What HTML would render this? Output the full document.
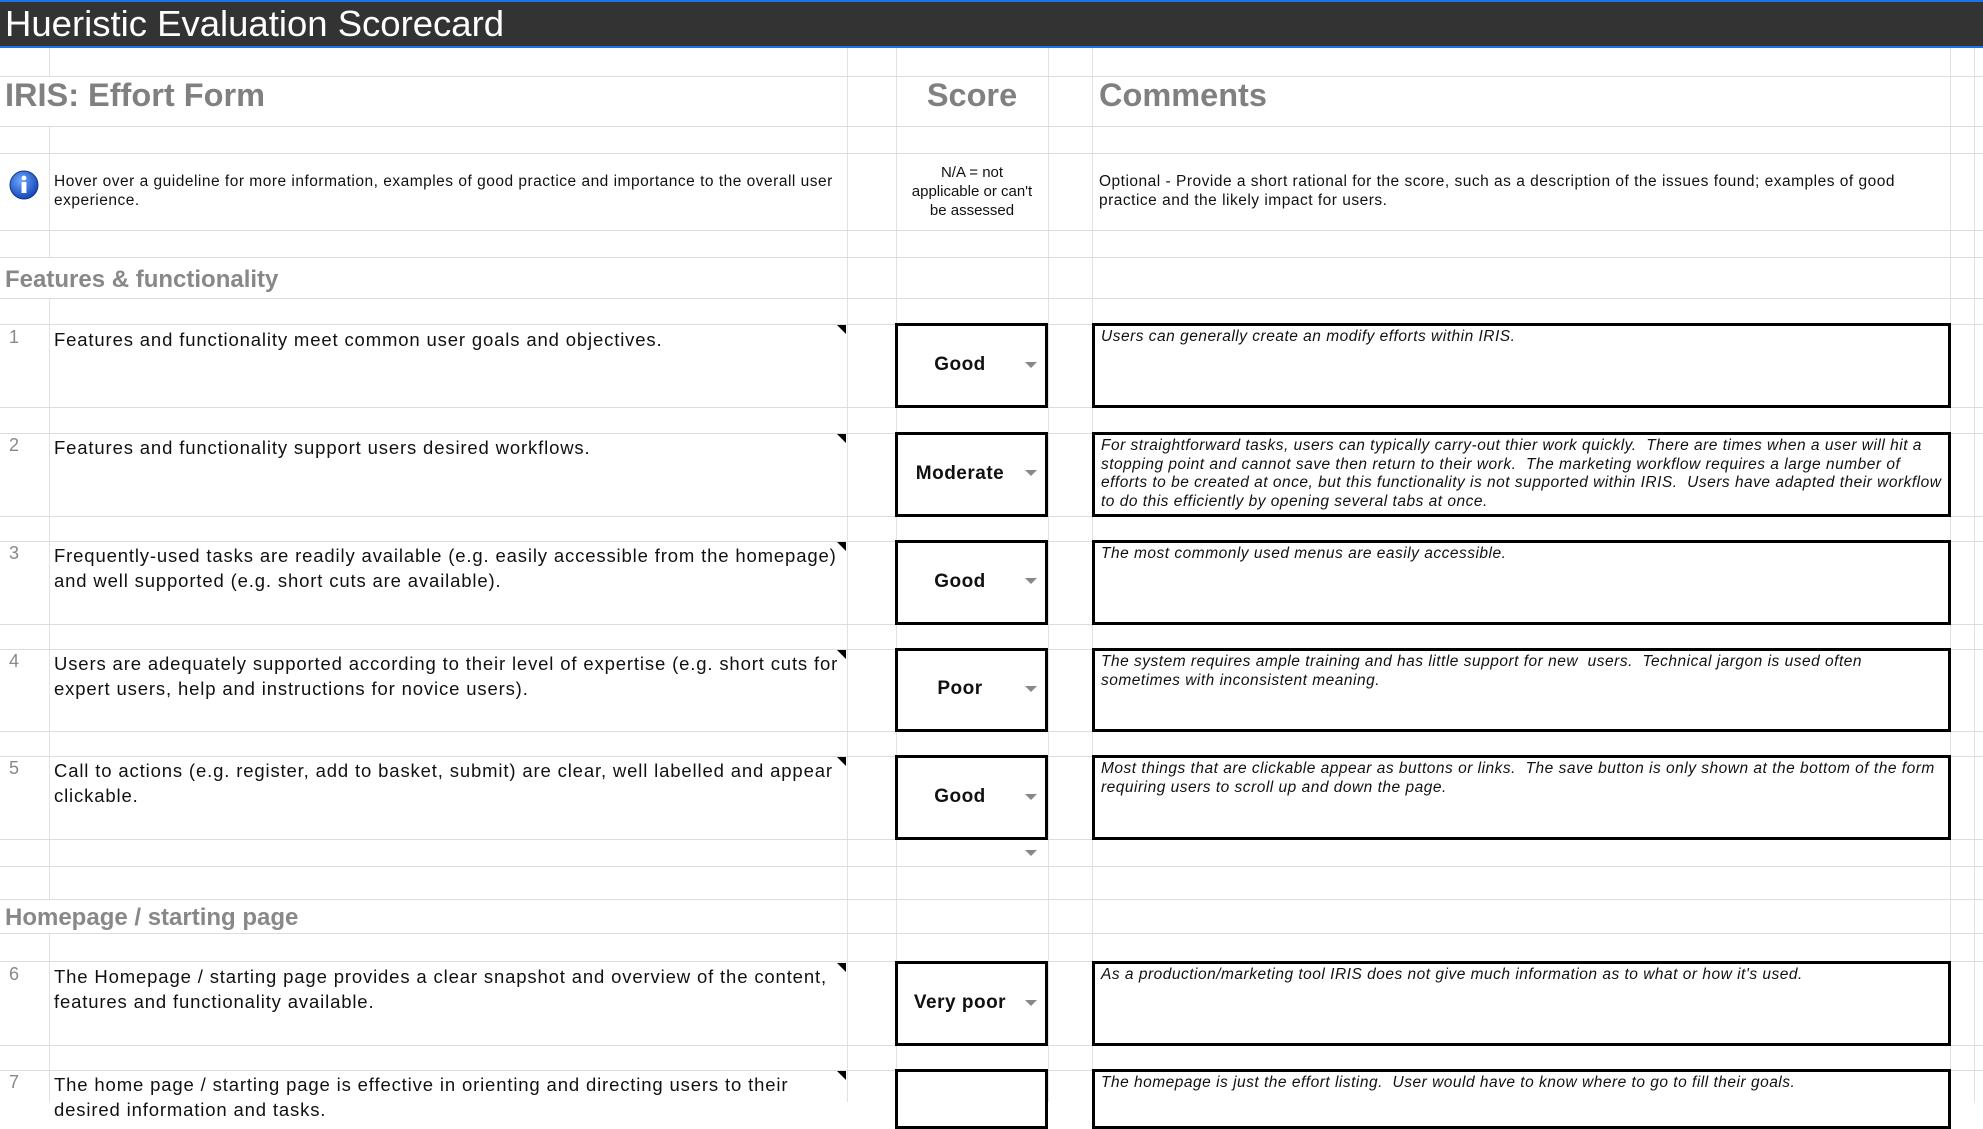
<!DOCTYPE html>
<html><head><meta charset="utf-8"><style>
*{margin:0;padding:0;box-sizing:border-box}
body{width:1983px;height:1102px;overflow:hidden;background:#fff;font-family:"Liberation Sans",Arial,sans-serif;position:relative}
.a{position:absolute}
.h{position:absolute;left:0;width:1983px;height:1px;background:#dcdcdc}
.v{position:absolute;top:48px;height:1054px;width:1px;background:#e2e2e2}
.num{position:absolute;left:9px;font-size:18px;color:#888}
.txt{position:absolute;left:54px;width:792px;font-size:18.5px;line-height:25px;color:#111;letter-spacing:.85px}
.tri{position:absolute;left:837px;width:0;height:0;border-left:9px solid transparent;border-top:9px solid #000}
.sb{position:absolute;left:895px;width:153px;border:3px solid #000;background:#fff}
.sb span{position:absolute;left:0;width:124px;text-align:center;font-weight:bold;font-size:19px;color:#111;letter-spacing:.5px}
.dd{position:absolute;left:1025px;width:0;height:0;border-left:6px solid transparent;border-right:6px solid transparent;border-top:6px solid #888}
.cb{position:absolute;left:1092px;width:859px;border:3px solid #000;background:#fff;padding:2px 6px;font-style:italic;font-size:15.5px;line-height:18.5px;color:#111;letter-spacing:.5px}
.sec{position:absolute;left:5px;font-size:24px;font-weight:bold;color:#888}
</style></head><body>
<div class="a" style="left:0;top:0;width:1983px;height:48px;background:#333;border-top:2px solid #1a73e8;border-bottom:2px solid #1a73e8"></div>
<div class="a" style="left:5px;top:3px;font-size:36.5px;color:#fff;line-height:42px">Hueristic Evaluation Scorecard</div>

<div class="v" style="left:49px"></div>
<div class="v" style="left:847px"></div>
<div class="v" style="left:896px"></div>
<div class="v" style="left:1048px"></div>
<div class="v" style="left:1092px"></div>
<div class="v" style="left:1950px"></div>
<div class="v" style="left:1974px"></div>

<div class="h" style="top:76px"></div><div class="h" style="top:126px"></div>
<div class="h" style="top:153px"></div><div class="h" style="top:230px"></div>
<div class="h" style="top:257px"></div><div class="h" style="top:298px"></div>
<div class="h" style="top:324px"></div><div class="h" style="top:407px"></div>
<div class="h" style="top:433px"></div><div class="h" style="top:516px"></div>
<div class="h" style="top:541px"></div><div class="h" style="top:624px"></div>
<div class="h" style="top:649px"></div><div class="h" style="top:731px"></div>
<div class="h" style="top:756px"></div><div class="h" style="top:839px"></div>
<div class="h" style="top:866px"></div><div class="h" style="top:899px"></div>
<div class="h" style="top:933px"></div><div class="h" style="top:961px"></div>
<div class="h" style="top:1045px"></div><div class="h" style="top:1070px"></div>

<div class="a" style="left:0;top:77px;width:846px;height:49px;background:#fff"></div>
<div class="a" style="left:0;top:258px;width:846px;height:40px;background:#fff"></div>
<div class="a" style="left:0;top:900px;width:846px;height:33px;background:#fff"></div>
<div class="a" style="left:1093px;top:77px;width:856px;height:49px;background:#fff"></div>
<div class="a" style="left:897px;top:77px;width:150px;height:49px;background:#fff"></div>
<div class="a" style="left:897px;top:154px;width:150px;height:76px;background:#fff"></div>

<div class="a" style="left:5px;top:77px;font-size:32.5px;font-weight:bold;color:#808080">IRIS: Effort Form</div>
<div class="a" style="left:896px;top:77px;width:152px;text-align:center;font-size:32.5px;font-weight:bold;color:#808080">Score</div>
<div class="a" style="left:1099px;top:77px;font-size:32.5px;font-weight:bold;color:#808080">Comments</div>

<svg class="a" style="left:9px;top:170px" width="30" height="30" viewBox="0 0 30 30"><defs><radialGradient id="g" cx="40%" cy="35%" r="65%"><stop offset="0" stop-color="#6fa8ff"/><stop offset="1" stop-color="#1747b8"/></radialGradient></defs><circle cx="15" cy="15" r="14" fill="url(#g)" stroke="#123a8f"/><circle cx="15" cy="8" r="2.4" fill="#fff"/><rect x="12.6" y="12" width="4.8" height="11" fill="#fff"/></svg>
<div class="a" style="left:54px;top:172px;width:800px;font-size:15.5px;line-height:19px;color:#111;letter-spacing:.5px">Hover over a guideline for more information, examples of good practice and importance to the overall user experience.</div>
<div class="a" style="left:896px;top:163px;width:152px;text-align:center;font-size:15px;line-height:19px;color:#111">N/A = not<br>applicable or can't<br>be assessed</div>
<div class="a" style="left:1099px;top:172px;width:845px;font-size:15.5px;line-height:19px;color:#111;letter-spacing:.5px">Optional - Provide a short rational for the score, such as a description of the issues found; examples of good practice and the likely impact for users.</div>

<div class="sec" style="top:266px">Features &amp; functionality</div>
<div class="sec" style="top:904px">Homepage / starting page</div>

<div class="num" style="top:327px">1</div>
<div class="txt" style="top:327px">Features and functionality meet common user goals and objectives.</div>
<div class="tri" style="top:325px"></div>
<div class="sb" style="top:323px;height:85px"><span style="top:28px">Good</span></div><div class="dd" style="top:362px"></div>
<div class="cb" style="top:323px;height:85px">Users can generally create an modify efforts within IRIS.</div>

<div class="num" style="top:435px">2</div>
<div class="txt" style="top:435px">Features and functionality support users desired workflows.</div>
<div class="tri" style="top:434px"></div>
<div class="sb" style="top:432px;height:85px"><span style="top:28px">Moderate</span></div><div class="dd" style="top:470px"></div>
<div class="cb" style="top:432px;height:85px">For straightforward tasks, users can typically carry-out thier work quickly.&nbsp; There are times when a user will hit a stopping point and cannot save then return to their work.&nbsp; The marketing workflow requires a large number of efforts to be created at once, but this functionality is not supported within IRIS.&nbsp; Users have adapted their workflow to do this efficiently by opening several tabs at once.</div>

<div class="num" style="top:543px">3</div>
<div class="txt" style="top:543px">Frequently-used tasks are readily available (e.g. easily accessible from the homepage) and well supported (e.g. short cuts are available).</div>
<div class="tri" style="top:542px"></div>
<div class="sb" style="top:540px;height:85px"><span style="top:28px">Good</span></div><div class="dd" style="top:578px"></div>
<div class="cb" style="top:540px;height:85px">The most commonly used menus are easily accessible.</div>

<div class="num" style="top:651px">4</div>
<div class="txt" style="top:651px">Users are adequately supported according to their level of expertise (e.g. short cuts for expert users, help and instructions for novice users).</div>
<div class="tri" style="top:650px"></div>
<div class="sb" style="top:648px;height:84px"><span style="top:27px">Poor</span></div><div class="dd" style="top:686px"></div>
<div class="cb" style="top:648px;height:84px">The system requires ample training and has little support for new&nbsp; users.&nbsp; Technical jargon is used often sometimes with inconsistent meaning.</div>

<div class="num" style="top:758px">5</div>
<div class="txt" style="top:758px">Call to actions (e.g. register, add to basket, submit) are clear, well labelled and appear clickable.</div>
<div class="tri" style="top:757px"></div>
<div class="sb" style="top:755px;height:85px"><span style="top:28px">Good</span></div><div class="dd" style="top:794px"></div>
<div class="cb" style="top:755px;height:85px">Most things that are clickable appear as buttons or links.&nbsp; The save button is only shown at the bottom of the form requiring users to scroll up and down the page.</div>
<div class="dd" style="top:850px"></div>

<div class="num" style="top:964px">6</div>
<div class="txt" style="top:964px">The Homepage / starting page provides a clear snapshot and overview of the content, features and functionality available.</div>
<div class="tri" style="top:963px"></div>
<div class="sb" style="top:961px;height:85px"><span style="top:28px">Very poor</span></div><div class="dd" style="top:1000px"></div>
<div class="cb" style="top:961px;height:85px">As a production/marketing tool IRIS does not give much information as to what or how it's used.</div>

<div class="num" style="top:1072px">7</div>
<div class="txt" style="top:1072px">The home page / starting page is effective in orienting and directing users to their desired information and tasks.</div>
<div class="tri" style="top:1071px"></div>
<div class="sb" style="top:1069px;height:60px"></div>
<div class="cb" style="top:1069px;height:60px">The homepage is just the effort listing.&nbsp; User would have to know where to go to fill their goals.</div>
</body></html>
